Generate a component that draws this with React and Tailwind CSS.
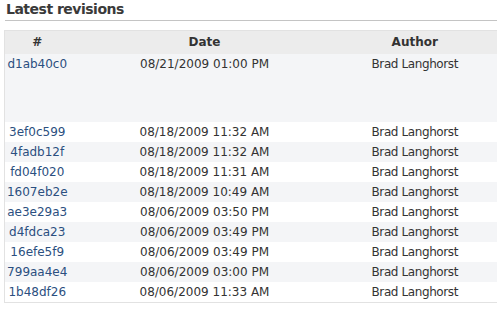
import React from 'react'

const revisions = [
  { id: 'd1ab40c0', date: '08/21/2009 01:00 PM', author: 'Brad Langhorst' },
  { id: '3ef0c599', date: '08/18/2009 11:32 AM', author: 'Brad Langhorst' },
  { id: '4fadb12f', date: '08/18/2009 11:32 AM', author: 'Brad Langhorst' },
  { id: 'fd04f020', date: '08/18/2009 11:31 AM', author: 'Brad Langhorst' },
  { id: '1607eb2e', date: '08/18/2009 10:49 AM', author: 'Brad Langhorst' },
  { id: 'ae3e29a3', date: '08/06/2009 03:50 PM', author: 'Brad Langhorst' },
  { id: 'd4fdca23', date: '08/06/2009 03:49 PM', author: 'Brad Langhorst' },
  { id: '16efe5f9', date: '08/06/2009 03:49 PM', author: 'Brad Langhorst' },
  { id: '799aa4e4', date: '08/06/2009 03:00 PM', author: 'Brad Langhorst' },
  { id: '1b48df26', date: '08/06/2009 11:33 AM', author: 'Brad Langhorst' },
]

const App = () => {
  return (
    <div className="w-[497px] h-[310px] bg-white overflow-hidden font-['DejaVu_Sans',Verdana,sans-serif] text-[#333]">
      {/* TITLE */}
      <div className="ml-[5px] h-[21px] border-b border-[#c4c4c4]">
        <h2 className="pl-px pt-[1px] text-[14px] leading-[17px] font-bold tracking-[-0.5px] text-[#3a3a3a]">
          Latest revisions
        </h2>
      </div>

      {/* TABLE */}
      <div className="mt-[9px] ml-[4px] overflow-hidden">
        <table className="w-[497px] table-fixed border-collapse border border-[#e2e2e2] text-[12px]">
          <colgroup>
            <col className="w-[65px]" />
            <col className="w-[270px]" />
            <col />
          </colgroup>
          <thead>
            <tr className="bg-[#ececec] h-[23px]">
              <th className="font-bold text-center leading-[23px] p-0">#</th>
              <th className="font-bold text-center leading-[23px] p-0">Date</th>
              <th className="font-bold text-center leading-[23px] p-0 pr-[10px]">Author</th>
            </tr>
          </thead>
          <tbody>
            {revisions.map((r, i) => (
              <tr
                key={r.id}
                className={`${i % 2 === 0 ? 'bg-[#f4f5f7]' : 'bg-white'} ${i === 0 ? 'h-[68px]' : 'h-[20px]'}`}
              >
                <td className="align-top text-center leading-[20px] p-0 text-[#2b4f80]">
                  {r.id}
                </td>
                <td className="align-top text-center leading-[20px] p-0">{r.date}</td>
                <td className="align-top text-center leading-[20px] p-0 pr-[10px] tracking-[-0.4px]">
                  {r.author}
                </td>
              </tr>
            ))}
          </tbody>
        </table>
      </div>
    </div>
  )
}

export default App
